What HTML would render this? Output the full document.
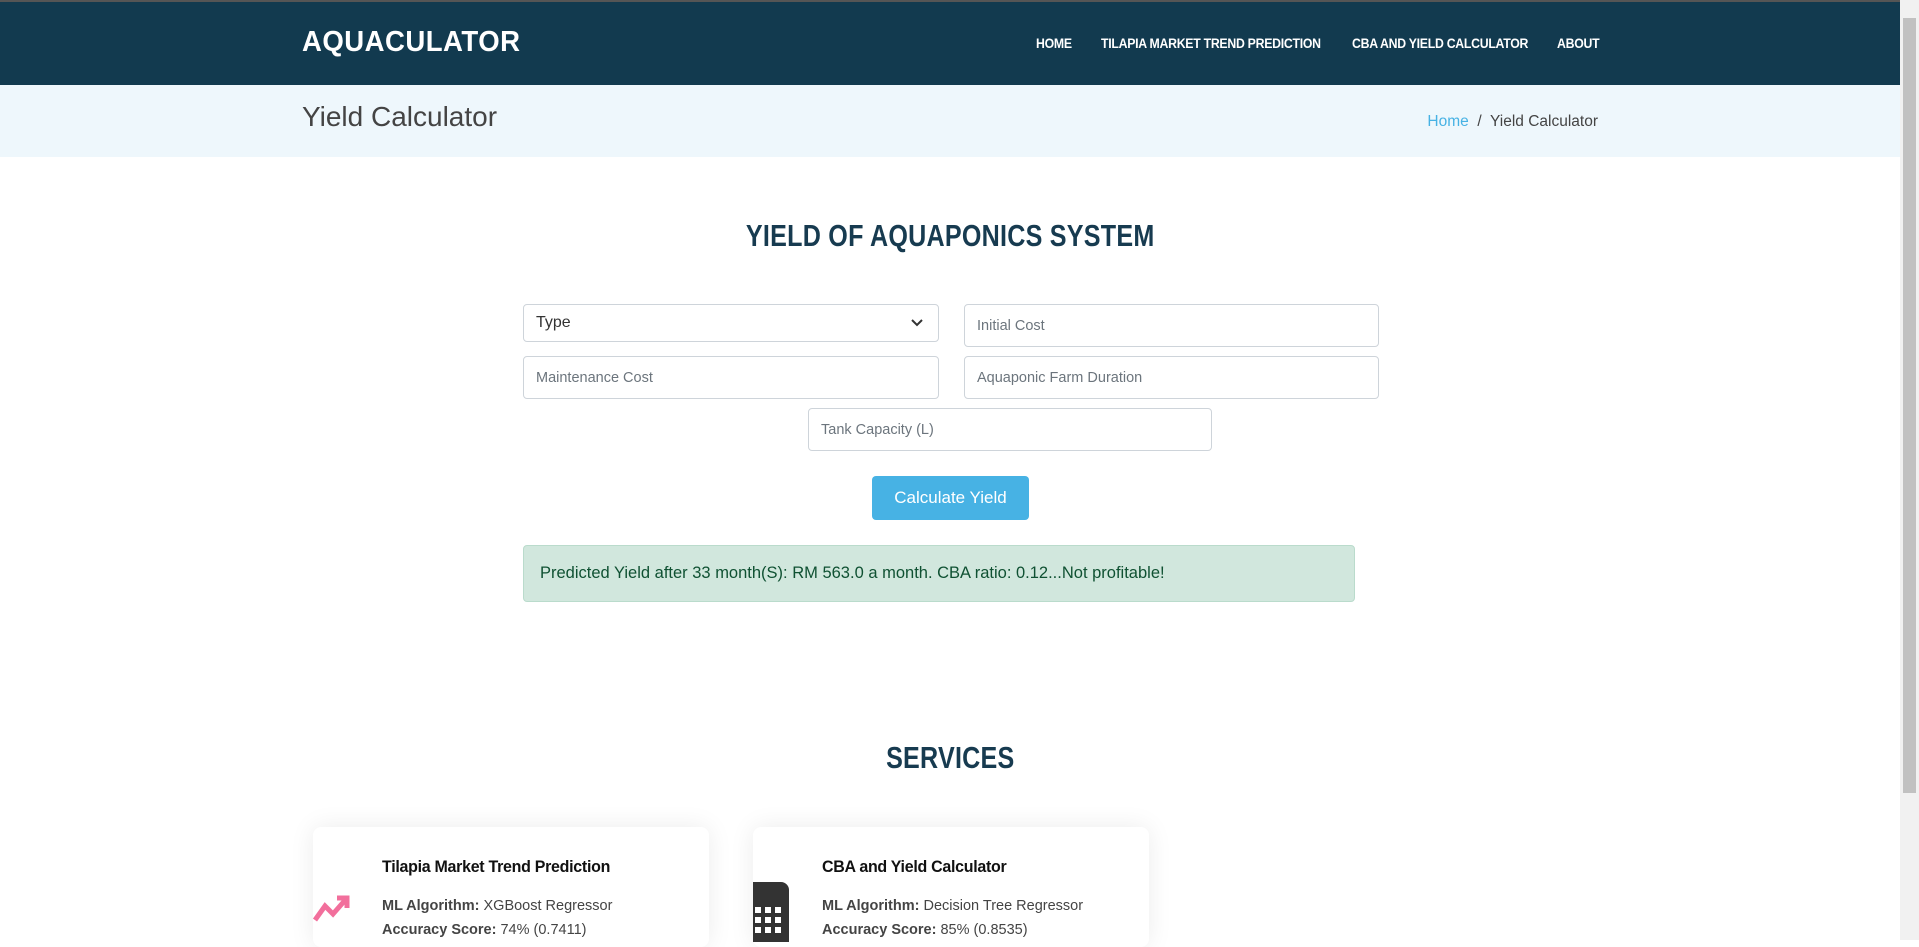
<!DOCTYPE html>
<html><head><style>
*{box-sizing:border-box;margin:0;padding:0}
html,body{width:1919px;height:940px;overflow:hidden;background:#fff;font-family:"Liberation Sans",sans-serif}
.top{position:absolute;left:0;top:0;width:1900px;height:2px;background:#555}
nav{position:absolute;left:0;top:2px;width:1900px;height:83px;background:#123a4f}
.logo{position:absolute;left:302px;top:24px;color:#fff;font-size:29px;font-weight:bold;letter-spacing:0.5px;transform:scaleX(0.95);transform-origin:left}
.links{position:absolute;top:34px;color:#fff;font-size:13.5px;font-weight:bold;letter-spacing:-0.3px;transform:scaleX(0.91);transform-origin:left;white-space:nowrap}
.bc{position:absolute;left:0;top:85px;width:1900px;height:72px;background:#eef7fc}
.bc h2{position:absolute;left:302px;top:16px;font-size:28px;font-weight:normal;color:#444}
.bc .r{position:absolute;right:302px;top:28px;font-size:15.5px;color:#444}
.bc .r span{color:#47b2e4}
h1{position:absolute;left:0;width:1900px;text-align:center;font-size:31px;font-weight:bold;color:#173b50;letter-spacing:0.3px}
h1 span{display:inline-block;transform:scaleX(0.81)}
.in{position:absolute;border:1px solid #ced4da;border-radius:4px;background:#fff;font-size:14.5px;color:#6c757d;padding-left:12px;display:flex;align-items:center}
.btn{position:absolute;left:872px;top:476px;width:157px;height:44px;background:#47b2e4;color:#fff;border-radius:4px;font-size:17px;display:flex;align-items:center;justify-content:center}
.alert{position:absolute;left:523px;top:545px;width:832px;height:57px;background:#d1e7dd;border:1px solid #badbcc;border-radius:4px;color:#0f5132;font-size:16.5px;padding:18px 0 0 16px}
.card{position:absolute;top:827px;width:396px;height:120px;background:#fff;border-radius:8px;box-shadow:0 0 25px rgba(0,0,0,0.08)}
.card h4{position:absolute;left:69px;top:30px;font-size:17px;color:#111;letter-spacing:-0.3px;transform:scaleX(0.94);transform-origin:left;white-space:nowrap}
.card p{position:absolute;left:69px;font-size:14.5px;color:#444}
.scroll{position:absolute;left:1900px;top:0;width:19px;height:940px;background:#f1f1f1}
.scroll div{position:absolute;left:3px;top:18px;width:13px;height:775px;background:#c1c1c1}
</style></head><body>
<div class="top"></div>
<nav><div class="logo">AQUACULATOR</div>
<div class="links" style="left:1036px">HOME</div>
<div class="links" style="left:1101px">TILAPIA MARKET TREND PREDICTION</div>
<div class="links" style="left:1352px">CBA AND YIELD CALCULATOR</div>
<div class="links" style="left:1557px">ABOUT</div>
</nav>
<div class="bc"><h2>Yield Calculator</h2><div class="r"><span>Home</span> &nbsp;/&nbsp; Yield Calculator</div></div>
<h1 style="top:218px"><span>YIELD OF AQUAPONICS SYSTEM</span></h1>
<div class="in" style="left:523px;top:304px;width:416px;height:38px;color:#333;font-size:16px">Type
<svg style="position:absolute;right:14px;top:13px" width="14" height="10" viewBox="0 0 14 10"><path d="M2 2l5 5 5-5" stroke="#333" stroke-width="2" fill="none"/></svg></div>
<div class="in" style="left:964px;top:304px;width:415px;height:43px">Initial Cost</div>
<div class="in" style="left:523px;top:356px;width:416px;height:43px">Maintenance Cost</div>
<div class="in" style="left:964px;top:356px;width:415px;height:43px">Aquaponic Farm Duration</div>
<div class="in" style="left:808px;top:408px;width:404px;height:43px">Tank Capacity (L)</div>
<div class="btn">Calculate Yield</div>
<div class="alert">Predicted Yield after 33 month(S): RM 563.0 a month. CBA ratio: 0.12...Not profitable!</div>
<h1 style="top:740px"><span>SERVICES</span></h1>
<div class="card" style="left:313px">
<svg style="position:absolute;left:0;top:67px" width="40" height="30" viewBox="0 0 40 30"><path d="M2 26l10-14 8 8 14-16M24 4h10v10" stroke="#f26f9c" stroke-width="5" fill="none"/></svg>
<h4>Tilapia Market Trend Prediction</h4>
<p style="top:71px"><b>ML Algorithm:</b> XGBoost Regressor</p>
<p style="top:95px"><b>Accuracy Score:</b> 74% (0.7411)</p></div>
<div class="card" style="left:753px">
<svg style="position:absolute;left:0;top:55px" width="40" height="60" viewBox="0 0 40 60"><path d="M0 0h28a8 8 0 0 1 8 8v60H0z" fill="#333"/><g fill="#fff"><rect x="2" y="25" width="6" height="6"/><rect x="12" y="25" width="6" height="6"/><rect x="22" y="25" width="6" height="6"/><rect x="2" y="35" width="6" height="6"/><rect x="12" y="35" width="6" height="6"/><rect x="22" y="35" width="6" height="6"/><rect x="2" y="45" width="6" height="6"/><rect x="12" y="45" width="6" height="6"/><rect x="22" y="45" width="6" height="6"/></g></svg>
<h4>CBA and Yield Calculator</h4>
<p style="top:71px"><b>ML Algorithm:</b> Decision Tree Regressor</p>
<p style="top:95px"><b>Accuracy Score:</b> 85% (0.8535)</p></div>
<div class="scroll"><div></div></div>
</body></html>
